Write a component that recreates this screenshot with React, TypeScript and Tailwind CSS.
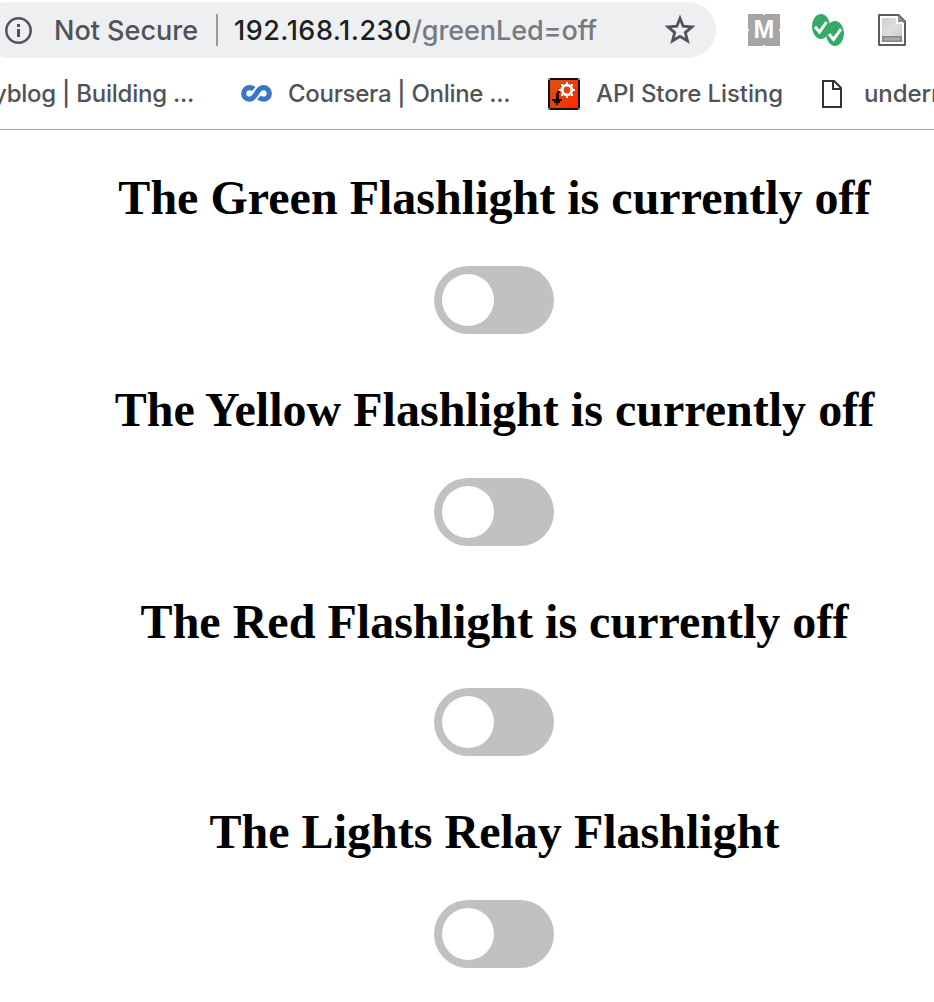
import React from 'react';

function InfoIcon() {
  return (
    <svg className="h-7 w-7 shrink-0" viewBox="0 0 28 28" fill="none">
      <circle cx="14.5" cy="14.5" r="12.2" stroke="#505357" strokeWidth="2.5" />
      <path d="M13 13h3v8h-3zM13 8h3v3h-3z" fill="#505357" />
    </svg>
  );
}

function StarIcon() {
  return (
    <svg className="h-8 w-8 shrink-0" viewBox="0 0 32 32" fill="none">
      <path
        d="M16 4.2 19.2 12.2 28 12.9 21.3 18.6 23.5 27 16 22.4 8.5 27 10.7 18.6 4 12.9 12.8 12.2Z"
        stroke="#505357"
        strokeWidth="2.8"
      />
    </svg>
  );
}

function MediumIcon() {
  return (
    <span className="grid h-8 w-8 shrink-0 place-items-center">
      <svg className="col-start-1 row-start-1 h-8 w-8" viewBox="0 0 32 32">
        <path d="M0 0H15V1H17V0H32V15H31V17H32V32H17V31H15V32H0V17H1V15H0Z" fill="#a5a5a5" />
      </svg>
      <span className="z-10 col-start-1 row-start-1 mb-0.5 font-['Liberation_Sans',sans-serif] text-[25px] leading-none font-bold text-white">
        M
      </span>
    </span>
  );
}

function ChecksIcon() {
  return (
    <svg className="h-8 w-8 shrink-0" viewBox="0 0 32 32" fill="none">
      <ellipse cx="9" cy="12.5" rx="9" ry="12.5" fill="#34a968" />
      <ellipse cx="23" cy="19.5" rx="9" ry="12.5" fill="#34a968" />
      <path d="M3 12.8 7.5 18 14.5 8M17 20 21.5 25.5 29 15" stroke="#fff" strokeWidth="3" />
    </svg>
  );
}

function DriveDocIcon() {
  return (
    <svg className="h-8 w-7 shrink-0" viewBox="0 0 28 32">
      <defs>
        <linearGradient id="paper" x1="0" y1="0" x2="1" y2="1">
          <stop offset="0" stopColor="#cfcfcf" />
          <stop offset=".5" stopColor="#dedede" />
          <stop offset="1" stopColor="#c5c5c5" />
        </linearGradient>
      </defs>
      <path d="M1 1H20.5L27 7.5V31H1Z" fill="#fff" stroke="#5d5d5d" strokeWidth="2" strokeLinejoin="round" />
      <path d="M20 1 27 8V9H20Z" fill="#8c8c8c" />
      <path d="M4 4H18V10H24V28H4Z" fill="url(#paper)" />
      <path d="M19 3V9H25" fill="none" stroke="#fff" strokeWidth="2" />
      <path d="M4.8 22.8H23.2V27.2H4.8Z" fill="#aaa" stroke="#868686" strokeWidth="1.6" />
    </svg>
  );
}

function CourseraIcon() {
  return (
    <svg className="h-[17px] w-[31px] shrink-0" viewBox="0 0 31 17" fill="none" stroke="#3a76c3" strokeWidth="5.2">
      <path d="M12.8 4.1C11.6 3.1 10.3 2.7 8.7 2.7C5.2 2.7 2.7 5 2.7 8.4S5.2 14.1 8.7 14.1C15.4 14.1 15.4 2.7 22.3 2.7C25.8 2.7 28.3 5 28.3 8.4S25.8 14.1 22.3 14.1C20.6 14.1 19.2 13.6 18 12.4" />
    </svg>
  );
}

function ApiIcon() {
  return (
    <svg className="h-8 w-8 shrink-0" viewBox="0 0 32 32">
      <defs>
        <linearGradient id="ember" x1="0" y1="0" x2="1" y2="1">
          <stop offset="0" stopColor="#d75415" />
          <stop offset="1" stopColor="#ff2800" />
        </linearGradient>
      </defs>
      <rect width="32" height="32" fill="#8b8b8b" />
      <path d="M2 0H30V2H32V30H30V32H2V30H0V2H2Z" fill="#111" />
      <rect x="2" y="2" width="28" height="28" fill="url(#ember)" />
      <circle cx="19" cy="12" r="4.8" fill="none" stroke="#fff" strokeWidth="2.8" />
      <path
        d="M18 4H20V7H18ZM18 17H20V20H18ZM11 11H14V13H11ZM24 11H27V13H24ZM13 6H15V8H13ZM23 6H25V8H23ZM13 16H15V18H13ZM23 16H25V18H23Z"
        fill="#fff"
      />
      <path d="M9 13H12V15H11V21H14V23H12V25H10V27H8V25H6V23H4V21H8V15H9Z" fill="#1b0d08" />
    </svg>
  );
}

function PageIcon() {
  return (
    <svg className="h-7 w-5 shrink-0" viewBox="0 0 20 28" fill="none" stroke="#333" strokeWidth="2">
      <path d="M1 1H12.2L19 8V27H1Z" />
      <path d="M11 1V9H19" />
    </svg>
  );
}

function Toggle() {
  return (
    <button type="button" role="switch" aria-checked="false" className="block h-[68px] w-[120px] rounded-full bg-[#c1c1c1] p-2">
      <span className="block h-[52px] w-[52px] rounded-full bg-white" />
    </button>
  );
}

function Light({ title, gap }: { title: string; gap: string }) {
  return (
    <section className="flex flex-col items-center">
      <h2 className="h-14 pl-px whitespace-nowrap text-5xl leading-[56px] font-bold tracking-[0.02px]">{title}</h2>
      <div className={gap}>
        <Toggle />
      </div>
    </section>
  );
}

export default function App() {
  return (
    <div className="h-[1002px] w-full overflow-hidden bg-white font-['Inter',sans-serif] font-[450] text-[#505357]">
      <header className="h-[130px] border-b border-[#a3a3a3] pt-0.5">
        <div className="flex h-14 items-center">
          <div className="-ml-5 flex h-14 w-[736px] shrink-0 items-center rounded-full bg-[#eeeff1] pl-6 whitespace-nowrap text-[27px]">
            <InfoIcon />
            <span className="ml-[22px] w-[162px] shrink-0 pt-0.5">Not Secure</span>
            <span className="h-8 w-0.5 shrink-0 bg-[#989a9e]" />
            <span className="ml-4 w-[430px] shrink-0 pt-0.5 text-[#1d1f22]">
              <span className="tracking-[0.5px]">192.168.1.230</span>
              <span className="tracking-[-0.1px] text-[#757a80]">/greenLed=off</span>
            </span>
            <StarIcon />
          </div>
          <div className="ml-8 flex shrink-0 items-center">
            <MediumIcon />
            <span className="w-8" />
            <ChecksIcon />
            <span className="w-[34px]" />
            <DriveDocIcon />
          </div>
        </div>
        <nav className="flex h-[71px] items-center whitespace-nowrap text-[24px]">
          <span className="flex w-[194px] shrink-0 justify-end tracking-[-0.25px]">yblog | Building ...</span>
          <span className="ml-[47px] flex w-[307px] shrink-0 items-center">
            <CourseraIcon />
            <span className="ml-4 tracking-[-0.3px]">Coursera | Online ...</span>
          </span>
          <span className="flex w-[274px] shrink-0 items-center">
            <ApiIcon />
            <span className="ml-4 tracking-[-0.1px]">API Store Listing</span>
          </span>
          <span className="flex shrink-0 items-center">
            <PageIcon />
            <span className="ml-[22px] tracking-[-0.1px]">undern</span>
          </span>
        </nav>
      </header>
      <main className="flex w-[988px] flex-col pt-10 font-['Liberation_Serif',serif] text-black">
        <Light title="The Green Flashlight is currently off" gap="pt-10" />
        <div className="h-12" />
        <Light title="The Yellow Flashlight is currently off" gap="pt-10" />
        <div className="h-12" />
        <Light title="The Red Flashlight is currently off" gap="pt-[38px]" />
        <div className="h-12" />
        <Light title="The Lights Relay Flashlight" gap="pt-10" />
      </main>
    </div>
  );
}
